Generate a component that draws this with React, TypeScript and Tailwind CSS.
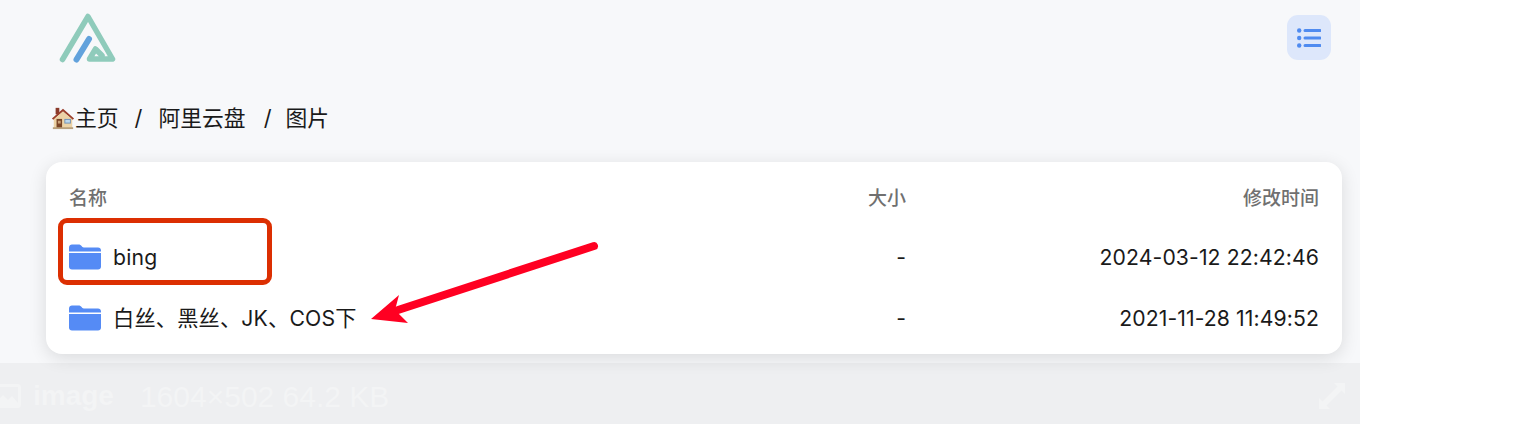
const font = "font-['Inter','Noto_Sans_CJK_SC',sans-serif]"

const FolderIcon = () => (
    <svg width="32" height="26" viewBox="0 0 32 26" className="shrink-0">
        <path d="M0 3.5C0 1.6 1.4 0.5 3 0.5H9.5C11 0.5 11.8 1 12.8 2.2C13.6 3.2 14.4 3.6 15.6 3.6H29C30.8 3.6 32 4.8 32 6.4V7.6H0Z" fill="#558bf5" />
        <path d="M0 9H32V22.5C32 24.4 30.8 25.5 29 25.5H3C1.2 25.5 0 24.4 0 22.5Z" fill="#558bf5" />
    </svg>
)

const HouseIcon = () => (
    <svg width="24" height="24" viewBox="0 0 26 24" className="shrink-0">
        <rect x="5" y="1" width="4" height="7" fill="#8a3a2a" />
        <path d="M3 11H23V23H3Z" fill="#ecd3a6" />
        <path d="M1 12.5L13 2L25 12.5L23.5 14L13 5L2.5 14Z" fill="#9a3f2c" />
        <path d="M13 5L22 12.5V14H4V12.5Z" fill="#ecd3a6" />
        <rect x="6" y="13" width="6" height="10" fill="#7a4526" />
        <rect x="7.5" y="15" width="3" height="3" fill="#c9a27a" />
        <rect x="14.5" y="13" width="7" height="5" fill="#6d8fb5" />
        <rect x="15.5" y="14" width="5" height="3" fill="#bcd8ee" />
        <rect x="2" y="22" width="22" height="2" fill="#b8a07c" />
    </svg>
)

const rows = [
    { name: "bing", size: "-", time: "2024-03-12 22:42:46" },
    { name: "白丝、黑丝、JK、COS下", size: "-", time: "2021-11-28 11:49:52" },
]

export default function App() {
    return (
        <div className={`relative flex h-[424px] w-[1516px] overflow-hidden bg-white ${font}`}>
            <div className="flex w-[1360px] flex-col">
                <div className="relative z-10 flex h-[363px] flex-col bg-[#f7f8fa] pl-[46px] pr-[18px]">
                    <div className="flex h-[104px] items-start justify-between pt-[13px] pr-[11px]">
                        <svg width="60" height="52" viewBox="0 0 60 52" className="ml-[12px]">
                            <path d="M4.5 46.5L30 3.5L54.5 46H31.5L37.5 36L44 42.5" fill="none" stroke="#8fcbbb" strokeWidth="5.5" strokeLinecap="round" strokeLinejoin="round" />
                            <path d="M31 26L18.5 46.5" fill="none" stroke="#62a2dc" strokeWidth="6" strokeLinecap="round" />
                        </svg>
                        <button className="mt-[2px] flex h-[45px] w-[44px] items-center justify-center rounded-[11px] bg-[#dde7fb]">
                            <svg width="24" height="20" viewBox="0 0 24 20">
                                <circle cx="2.2" cy="2.5" r="2.2" fill="#4f8bf0" />
                                <circle cx="2.2" cy="10" r="2.2" fill="#4f8bf0" />
                                <circle cx="2.2" cy="17.5" r="2.2" fill="#4f8bf0" />
                                <path d="M8 2.5H23M8 10H23M8 17.5H23" stroke="#4f8bf0" strokeWidth="3" strokeLinecap="round" />
                            </svg>
                        </button>
                    </div>
                    <nav className="flex h-[28px] items-center pl-[5px] text-[21.8px] text-[#1a1a1a]">
                        <HouseIcon />
                        <span>主页</span>
                        <span className="mx-[16px]">/</span>
                        <span>阿里云盘</span>
                        <span className="ml-[18px] mr-[14px]">/</span>
                        <span>图片</span>
                    </nav>
                    <div className="relative mt-[30px] h-[192px] w-[1296px] rounded-[16px] bg-white px-[23px] pt-[23px] shadow-[0_4px_18px_rgba(0,0,0,0.12)]">
                        <div className="mb-[14px] grid h-[28px] grid-cols-[737px_100px_413px] items-center text-[19px] font-medium text-[#707070]">
                            <span>名称</span>
                            <span className="text-right">大小</span>
                            <span className="text-right">修改时间</span>
                        </div>
                        {rows.map((row) => (
                            <div key={row.name} className="grid h-[61px] grid-cols-[737px_100px_413px] items-center text-[21.2px] text-[#1a1a1a]">
                                <div className="flex items-center gap-[12px]">
                                    <FolderIcon />
                                    <span className="tracking-[0.2px]">{row.name}</span>
                                </div>
                                <span className="text-right">{row.size}</span>
                                <span className="text-right tracking-[0.1px]">{row.time}</span>
                            </div>
                        ))}
                        <div className="absolute left-[12px] top-[56px] h-[67px] w-[214px] rounded-[9px] border-[5px] border-[#dc2f02]" />
                    </div>
                </div>
                <div className="flex h-[61px] items-center justify-between bg-[#eeeff1] pr-[15px] pt-[5px] font-['Liberation_Sans',sans-serif] text-[30px] text-[#f3f4f5]">
                    <div className="flex items-center">
                        <svg width="30" height="24" viewBox="0 0 30 24" className="ml-[-9px]">
                            <rect x="1.5" y="1.5" width="27" height="21" rx="2" fill="none" stroke="#f3f4f5" strokeWidth="3" />
                            <path d="M3 21L12 11L17 16L21 12L27 19V21Z" fill="#f3f4f5" />
                        </svg>
                        <span className="ml-[12px] text-[28px] font-bold">image</span>
                        <span className="ml-[26px]">1604×502 64.2 KB</span>
                    </div>
                    <svg width="26" height="26" viewBox="0 0 26 26">
                        <path d="M15 0H26V11L22.5 7.5L7.5 22.5L11 26H0V15L3.5 18.5L18.5 3.5Z" fill="#f3f4f5" />
                    </svg>
                </div>
            </div>
            <svg width="240" height="90" viewBox="0 0 240 90" className="absolute left-[364px] top-[238px] z-20">
                <path d="M230 8L34 72" fill="none" stroke="#ff0022" strokeWidth="8" strokeLinecap="round" />
                <path d="M7 81L35 57L31 72L44 85Z" fill="#ff0022" />
            </svg>
        </div>
    )
}
